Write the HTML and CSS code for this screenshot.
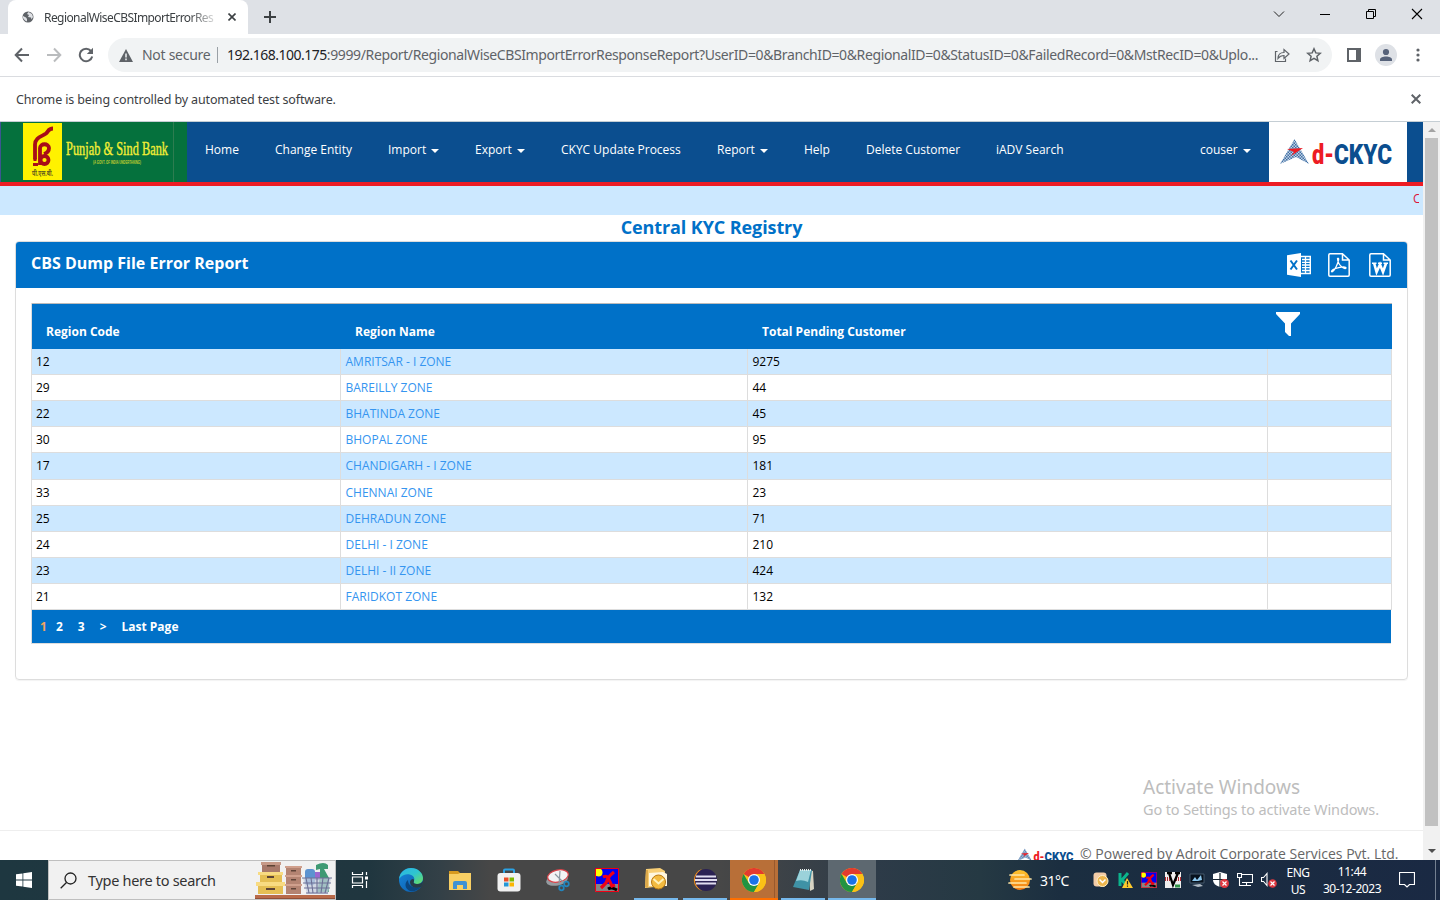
FILE: index.html
```html
<!DOCTYPE html>
<html lang="en">
<head>
<meta charset="utf-8">
<title>RegionalWiseCBSImportErrorResponseReport</title>
<link rel="stylesheet" href="styles.css">
</head>
<body>
<svg class="defs" width="0" height="0">
  <defs>
    <pattern id="mesh" width="3" height="3" patternUnits="userSpaceOnUse"><rect width="3" height="3" fill="#c3d2e4"/><path d="M0 0h1.500v1.500H0zM1.500 1.500h1.500v1.500H1.500z" fill="#3f70a6"/></pattern>
    <linearGradient id="edgeA" x1="0" y1="0" x2="1" y2="1"><stop offset="0" stop-color="#2bb4e6"/><stop offset=".5" stop-color="#2fc5cf"/><stop offset="1" stop-color="#6ee05a"/></linearGradient>
    <linearGradient id="edgeB" x1="0" y1="0" x2="1" y2="1"><stop offset="0" stop-color="#1788dc"/><stop offset="1" stop-color="#0c59a8"/></linearGradient>
    <linearGradient id="sun" x1="0" y1="0" x2="0" y2="1"><stop offset="0" stop-color="#ffc52e"/><stop offset="1" stop-color="#f07a12"/></linearGradient>
    <symbol id="chrome" viewBox="0 0 24 24">
      <circle cx="12" cy="12" r="12" fill="#fbc116"/>
      <path d="M12 12 1.6 6A12 12 0 0 1 22.4 6H12z" fill="#e33b2e"/>
      <path d="M1.6 6A12 12 0 0 0 12 24l5.2-9L12 12 6.8 15z" fill="#229342"/>
      <path d="M22.4 6H12v6l5.2 3L12 24A12 12 0 0 0 22.4 6z" fill="#fbc116"/>
      <circle cx="12" cy="12" r="6" fill="#fff"/><circle cx="12" cy="12" r="4.8" fill="#1a73e8"/>
    </symbol>
    <symbol id="xman" viewBox="0 0 24 24">
      <path fill="#0000f5" d="M0 0h24v24H0z"/><path fill="#858585" d="M0 16h24v8H0z"/><circle cx="3.5" cy="4.5" r="4" fill="#ff0"/>
      <path d="M13 21c3-2 5-1 9 1" stroke="#000" stroke-width="3" fill="none"/>
      <path d="M8 9c4-2 5 0 7 5l2 4 3-1M19 4c-4 3-7 7-8 11l-5 5" stroke="#f00014" stroke-width="3.2" fill="none"/>
      <path d="M.5.5h23v23H.5z" fill="none" stroke="#f00014"/>
    </symbol>
    <symbol id="ckyc" viewBox="0 0 114 30">
      <path d="M14.500 1 29 26 16 19 0 26z" fill="url(#mesh)"/>
      <path d="M7 11 23 10 11 18 14 14z" fill="#ed1c24"/>
      <text x="32" y="25.500" font-family="Roboto, sans-serif" font-weight="900" font-size="27" fill="#ed1c24" textLength="22" lengthAdjust="spacingAndGlyphs">d-</text>
      <text x="54" y="25.500" font-family="Roboto, sans-serif" font-weight="900" font-size="27" fill="#0b4e8f" textLength="58" lengthAdjust="spacingAndGlyphs">CKYC</text>
    </symbol>
  </defs>
</svg>

<header class="chrome">
  <div class="tabstrip">
    <div class="tab">
      <svg class="globe" width="12" height="12" viewBox="0 0 12 12"><circle cx="6" cy="6" r="5.5" fill="#5f6368"/><path d="M1 5l3 1.500 1 1.500v2.500L3 9.500 1 7zM6.500 1 5 3l2 1-1 2 3 .5L9.500 8.500 11 6 10 3z" fill="#dfe1e5"/></svg>
      <span class="tab-title">RegionalWiseCBSImportErrorRes</span>
      <svg class="tab-x" width="8" height="8" viewBox="0 0 8 8"><path d="M.5.5l7 7M7.500.5l-7 7" stroke="#3c4043" stroke-width="1.600"/></svg>
    </div>
    <svg class="newtab" width="12" height="12" viewBox="0 0 12 12"><path d="M6 0v12M0 6h12" stroke="#3c4043" stroke-width="2"/></svg>
    <div class="winctl">
      <svg width="12" height="12" viewBox="0 0 12 12"><path d="M1 3.500 6 8.500 11 3.500" fill="none" stroke="#222"/></svg>
      <svg width="12" height="12" viewBox="0 0 12 12"><path d="M1 6.500h10" stroke="#000"/></svg>
      <svg width="12" height="12" viewBox="0 0 12 12"><path d="M1.500 3.500h7v7h-7zM3.500 3V1.500h7v7H9" fill="none" stroke="#000"/></svg>
      <svg width="12" height="12" viewBox="0 0 12 12"><path d="M1 1l10 10M11 1 1 11" stroke="#000" stroke-width="1.100"/></svg>
    </div>
  </div>
  <div class="toolbar">
    <svg class="nav-ic" width="16" height="16" viewBox="0 0 16 16"><path d="M15 8H2M8 1.500 1.700 8 8 14.500" fill="none" stroke="#5f6368" stroke-width="2"/></svg>
    <svg class="nav-ic" width="16" height="16" viewBox="0 0 16 16"><path d="M1 8h13M8 1.500 14.300 8 8 14.500" fill="none" stroke="#babcbe" stroke-width="2"/></svg>
    <svg class="nav-ic" width="16" height="16" viewBox="0 0 16 16"><path d="M13 4A6.300 6.300 0 1 0 14.200 9.500" fill="none" stroke="#5f6368" stroke-width="2"/><path d="M15 .8V7H8.800z" fill="#5f6368"/></svg>
    <div class="omnibox">
      <svg width="14" height="13" viewBox="0 0 14 13"><path d="M7 0l7 13H0z" fill="#5f6368"/><path d="M7 4.500v4M7 9.500v1.700" stroke="#f1f3f4" stroke-width="1.500"/></svg>
      <span class="insecure">Not secure</span><i class="sep"></i>
      <span class="url"><b>192.168.100.175</b>:9999/Report/RegionalWiseCBSImportErrorResponseReport?UserID=0&amp;BranchID=0&amp;RegionalID=0&amp;StatusID=0&amp;FailedRecord=0&amp;MstRecID=0&amp;Uplo...</span>
      <svg class="share" width="16" height="16" viewBox="0 0 16 16"><path d="M3.500 4.500H1.500v10h10v-3" fill="none" stroke="#5f6368" stroke-width="1.200"/><path d="M4 11.500C4 8 6 5.500 10 5.500V2.500L15 7l-5 4.500V8.500C7 8.500 5.500 9.500 4 11.500z" fill="none" stroke="#5f6368" stroke-width="1.200"/></svg>
      <svg class="star" width="16" height="16" viewBox="0 0 16 16"><path d="M8 1.800l1.800 4.100 4.500.4-3.400 3 1 4.400L8 11.400l-3.900 2.300 1-4.400-3.400-3 4.500-.4z" fill="none" stroke="#5f6368" stroke-width="1.500"/></svg>
    </div>
    <svg class="side" width="14" height="14" viewBox="0 0 14 14"><path d="M0 0h14v14H0z" fill="#5f6368"/><path d="M2 2h7v10H2z" fill="#fff"/></svg>
    <svg class="avatar" width="22" height="22" viewBox="0 0 22 22"><circle cx="11" cy="11" r="11" fill="#dee1e6"/><circle cx="11" cy="8" r="3.100" fill="#56627a"/><path d="M5 17v-1.500c0-2 3-3 6-3s6 1 6 3V17z" fill="#56627a"/></svg>
    <svg class="dots" width="4" height="14" viewBox="0 0 4 14"><g fill="#5f6368"><circle cx="2" cy="2" r="1.600"/><circle cx="2" cy="7" r="1.600"/><circle cx="2" cy="12" r="1.600"/></g></svg>
  </div>
  <div class="infobar"><span>Chrome is being controlled by automated test software.</span>
    <svg width="10" height="10" viewBox="0 0 10 10"><path d="M.7.7l8.600 8.600M9.300.7.7 9.300" stroke="#5f6368" stroke-width="2"/></svg></div>
</header>

<div class="viewport">
  <main class="page">
    <nav class="navbar">
      <svg class="bank" width="187" height="60" viewBox="0 0 187 60">
        <path fill="#05713d" d="M0 0h187v60H0z"/><path d="M173.500 0v60" stroke="#2d7d50"/><path d="M.5 0v60" stroke="#3c5590"/><path fill="#fff200" d="M23 1h39v57H23z"/>
        <g fill="none" stroke="#a80d18" stroke-width="3.800"><path d="M53 6.500c-5 0-4.500 3-7 5-4 3-11 4-11 11v15"/><path d="M40 43V26c0-5 9-5 9 0 0 3-2 5-5 6"/><circle cx="44.500" cy="38" r="4"/><path d="M35 36v3M33 42.500h5" stroke-width="3"/></g>
        <text x="32" y="54" font-family="Noto Sans, sans-serif" font-size="8" font-weight="700" fill="#6b641c" textLength="21" lengthAdjust="spacingAndGlyphs">पी.एस.बी.</text>
        <text x="66" y="33" font-family="Liberation Serif, serif" font-size="19" fill="#f2ee35" stroke="#f2ee35" stroke-width=".4" textLength="102" lengthAdjust="spacingAndGlyphs">Punjab &amp; Sind Bank</text>
        <text x="93" y="42" font-family="Liberation Sans, sans-serif" font-size="4.500" font-weight="700" fill="#c5d02f" textLength="48" lengthAdjust="spacingAndGlyphs">(A GOVT. OF INDIA UNDERTAKING)</text>
      </svg>
      <ul class="menu">
        <li class="m-home">Home</li><li class="m-change">Change Entity</li><li class="m-import">Import<i class="caret"></i></li><li class="m-export">Export<i class="caret"></i></li><li class="m-update">CKYC Update Process</li><li class="m-report">Report<i class="caret"></i></li><li class="m-help">Help</li><li class="m-delete">Delete Customer</li><li>iADV Search</li>
      </ul>
      <div class="user">couser<i class="caret"></i></div>
      <div class="brand"><svg width="114" height="30"><use href="#ckyc"/></svg></div>
    </nav>
    <div class="ticker"><span>C</span></div>
    <h1>Central KYC Registry</h1>
    <section class="panel">
      <div class="panel-head"><h2>CBS Dump File Error Report</h2>
        <div class="exports">
          <svg width="24" height="24" viewBox="0 0 24 24"><path d="M0 2.200 14 0v24L0 21.800z" fill="#fff"/><path d="M3.500 7.500l6.500 9M10 7.500l-6.500 9" stroke="#0071c8" stroke-width="2"/><path d="M14 3.500h9.300v17H14" fill="none" stroke="#fff" stroke-width="1.500"/><path d="M15 6.500h8M15 9.300h8M15 12h8M15 14.700h8M15 17.500h8M18.500 4v16" stroke="#fff" stroke-width="1.300"/></svg>
          <svg width="22" height="24" viewBox="0 0 22 24"><path d="M14.500.8H2Q.8.800.8 2v20q0 1.200 1.200 1.200h18q1.200 0 1.200-1.200V7L14.500.8V7h6" fill="none" stroke="#fff" stroke-width="1.500"/><path d="M9.500 5.500C12 4 10 10 8 14s-4 5.500-4.500 4.500C3.500 16 18 12 18 15c-1 2-8-2-8.500-9.500z" fill="none" stroke="#fff" stroke-width="1.300"/></svg>
          <svg width="22" height="24" viewBox="0 0 22 24"><path d="M14.500.8H2Q.8.800.8 2v20q0 1.200 1.200 1.200h18q1.200 0 1.200-1.200V7L14.500.8V7h6" fill="none" stroke="#fff" stroke-width="1.500"/><path d="M5.200 10.500 7.600 19 11 11.500 14 19l3-8.500" fill="none" stroke="#fff" stroke-width="2.600"/><path d="M3 10.300h4.500M9 10.300h4M14.500 10.300H19" stroke="#fff" stroke-width="1.600"/></svg>
        </div>
      </div>
      <table>
        <thead><tr><th class="c1">Region Code</th><th class="c2">Region Name</th><th class="c3">Total Pending Customer</th><th class="c4"><svg width="24" height="25" viewBox="0 0 24 25"><path d="M0 0h24v2l-9 9.500V24h-2l-4-4V11.500L0 2z" fill="#fff"/></svg></th></tr></thead>
        <tbody>
          <tr><td>12</td><td>AMRITSAR - I ZONE</td><td>9275</td><td></td></tr>
          <tr><td>29</td><td>BAREILLY ZONE</td><td>44</td><td></td></tr>
          <tr><td>22</td><td>BHATINDA ZONE</td><td>45</td><td></td></tr>
          <tr><td>30</td><td>BHOPAL ZONE</td><td>95</td><td></td></tr>
          <tr class="tall"><td>17</td><td>CHANDIGARH - I ZONE</td><td>181</td><td></td></tr>
          <tr><td>33</td><td>CHENNAI ZONE</td><td>23</td><td></td></tr>
          <tr><td>25</td><td>DEHRADUN ZONE</td><td>71</td><td></td></tr>
          <tr><td>24</td><td>DELHI - I ZONE</td><td>210</td><td></td></tr>
          <tr><td>23</td><td>DELHI - II ZONE</td><td>424</td><td></td></tr>
          <tr><td>21</td><td>FARIDKOT ZONE</td><td>132</td><td></td></tr>
        </tbody>
      </table>
      <div class="pager"><span class="now">1</span><span class="p2">2</span><span>3</span><span>&gt;</span><span>Last Page</span></div>
    </section>
    <aside class="activate"><p class="a1">Activate Windows</p><p class="a2">Go to Settings to activate Windows.</p></aside>
    <footer><svg width="58" height="15"><use href="#ckyc"/></svg><span>© Powered by Adroit Corporate Services Pvt. Ltd.</span></footer>
  </main>
  <div class="scroll"><i class="up"></i><i class="thumb"></i><i class="down"></i></div>
</div>

<div class="taskbar">
  <div class="start"><svg width="16" height="16" viewBox="0 0 16 16"><path d="M0 2.300 6.500 1.400V7.500H0zM7.300 1.200 16 0v7.500H7.300zM0 8.500h6.500v6.100L0 13.700zM7.300 8.500H16V16l-8.700-1.200z" fill="#fff"/></svg></div>
  <div class="search">
    <svg width="17" height="17" viewBox="0 0 17 17"><circle cx="10.500" cy="6.500" r="5.500" fill="none" stroke="#222" stroke-width="1.300"/><path d="M6.500 10.500.7 16.300" stroke="#222" stroke-width="1.300"/></svg>
    <span>Type here to search</span>
    <svg class="boxes" width="80" height="38" viewBox="0 0 80 38">
      <path fill="#b96a49" d="M0 34h80v4H0z"/><path fill="#915038" d="M0 37h80v1H0z"/>
      <path fill="#a8796a" d="M7 1h18v10H7z"/><path fill="#c79a88" d="M6 1h20v3H6z"/><path fill="#e5bf54" d="M5 11h22v10H5zM3 22h25v11H3z"/><path fill="#f8db82" d="M3 11h25v3H3zM1 21h29v4H1z"/><path fill="#5d4435" d="M12 4h8v1.500h-8zM12 15h7v2h-7zM11 27h9v2h-9z"/>
      <path fill="#b48472" d="M31 6h15v27H31z"/><path fill="#d0a08d" d="M30 5h17v2H30zM30 14h17v2H30zM30 23h17v2H30z"/><path fill="#604438" d="M36 9h5v1.500h-5zM36 18h5v1.500h-5zM36 27h5v1.500h-5z"/>
      <rect x="50" y="8" width="10" height="16" rx="3" fill="#5c93d0"/><path fill="#9c68cf" d="M60 11h5v8h-5z"/><path fill="#3e9a73" d="M61 4q8-4 12 0v4h-4l5 9v14H62l3-15V8l-4 1z"/><path fill="#c4cede" fill-opacity=".75" d="M48 17h28l-3 16H52z"/>
      <path d="M47 17h30M48 22h28M49 27h26M51 32h22M51 17l3 15M56 17l2 15M62 17v15M68 17l-2 15M74 17l-4 15" stroke="#6c7096" stroke-width="1.100"/>
    </svg>
  </div>
  <div class="apps">
    <div class="app first"><svg width="18" height="16" viewBox="0 0 18 16"><path d="M1.500 0v2.500h10V0M1.500 16v-2.500h10V16M1.500 5h10v6h-10zM15.500 0v3M15.500 9v7" fill="none" stroke="#fff" stroke-width="1.200"/><path d="M14 4.500h3v3h-3z" fill="#fff"/></svg></div>
    <div class="app"><svg width="24" height="24" viewBox="0 0 24 24"><circle cx="12" cy="12" r="12" fill="url(#edgeB)"/><path d="M0 11C1 4 6 0 12 0c7 0 12 5 12 10 0 4-3 6-6 6-3 0-4-1-3-3C17 8 10 5 5 7 2 8 0 11 0 11z" fill="url(#edgeA)"/><path d="M9 12c0 6 6 9 13 7-3 3-7 5-11 4-5-2-6-8-2-11z" fill="#0b467f"/><path d="M15 13c-1 2 0 3 3 3 3 0 5-1 6-3 0 3-1 5-2 6-5 2-11 0-11-5 0-2 2-3 3-3 1 0 1 1 1 2z" fill="#263b48"/></svg></div>
    <div class="app"><svg width="22" height="19" viewBox="0 0 22 19"><path fill="#d79a1f" d="M0 0h9l2 2v5H0z"/><path fill="#f8cf64" d="M0 3h9l2-1h11v17H0z"/><path fill="#3f91d3" d="M4 18v-6q0-2 2-2h10q2 0 2 2v6h-4v-4H8v4z"/></svg></div>
    <div class="app"><svg width="24" height="24" viewBox="0 0 24 24"><path d="M7 6V2.500Q7 1.500 8 1.500h8q1 0 1 1V6" fill="none" stroke="#2ba3e5" stroke-width="2"/><rect x=".5" y="5" width="23" height="18.500" rx="3" fill="#f1f1f1"/><path fill="#e94f28" d="M7 9.500h4.500v4H7z"/><path fill="#7eb900" d="M12.500 9.500H17v4h-4.500z"/><path fill="#2497d6" d="M7 14.500h4.500v4H7z"/><path fill="#fbb600" d="M12.500 14.500H17v4h-4.500z"/></svg></div>
    <div class="app"><svg width="24" height="24" viewBox="0 0 24 24"><ellipse cx="11" cy="12" rx="11" ry="5.500" fill="#949ba0" transform="rotate(-12 11 12)"/><ellipse cx="12" cy="8" rx="10.500" ry="6" fill="#f2f3f4" stroke="#d94349" stroke-width="1.200" transform="rotate(-12 12 8)"/><path d="M9 6l9 9M14 3l-1 14" stroke="#8c98a1" stroke-width="1.200"/><g fill="none" stroke="#2385bd" stroke-width="1.700"><circle cx="15.500" cy="20" r="2.300"/><circle cx="20.500" cy="16" r="2.300"/></g></svg></div>
    <div class="app"><svg width="24" height="24"><use href="#xman"/></svg></div>
    <div class="app run"><svg width="24" height="24" viewBox="0 0 24 24"><path fill="#f8cf76" d="M2 1l14-1 5 3v15L1 20z"/><path fill="#fff7df" d="M5 5l14-1 4 2v12H5z"/><path fill="#dca94b" d="M2 2h2v18L1 19z"/><circle cx="14.500" cy="14" r="7" fill="#f3bb40" stroke="#b97a14"/><path d="M9.500 11l5 4.500 5-4.500" stroke="#fff1b8" stroke-width="2" fill="none"/></svg></div>
    <div class="app run"><svg width="24" height="24" viewBox="0 0 24 24"><path d="M9 1a11.500 11.500 0 0 0 0 22C2 18 2 6 9 1z" fill="#f7941e"/><circle cx="13" cy="12" r="11" fill="#2b2253"/><path d="M3 8.500h20M2 12h22M3 15.500h20" stroke="#e1def0" stroke-width="1.800"/></svg></div>
    <div class="app orange"><svg width="24" height="24"><use href="#chrome"/></svg></div>
    <div class="app run"><svg width="24" height="24" viewBox="0 0 24 24"><path fill="#d7d4c3" d="M18 2l4 1 1 18-4 2z"/><path fill="#3f92a6" d="M9 2h12l-3 20-16-3z"/><path fill="#9bd2da" d="M9 2h11l-3 12Q11 11 5 13z"/><path d="M9 2h12" stroke="#e5eeee" stroke-width="2" stroke-dasharray="1 1"/></svg></div>
    <div class="app active"><svg width="24" height="24"><use href="#chrome"/></svg></div>
  </div>
  <div class="weather"><svg width="24" height="20" viewBox="0 0 24 20"><circle cx="12" cy="10" r="10" fill="url(#sun)"/><path d="M2 5h14M7 9h16M1 13h17M6 17h15" stroke="#ffe6a4" stroke-width="1.700" stroke-linecap="round"/></svg><span>31°C</span></div>
  <div class="tray">
    <svg width="16" height="16" viewBox="0 0 16 16"><rect x=".5" y=".5" width="13" height="14" rx="3" fill="#f3cca7"/><circle cx="9.500" cy="9" r="5.500" fill="#edb64d" stroke="#fff0c5"/><path d="M6.500 7.500l3 3 3-3" stroke="#fff" stroke-width="1.500" fill="none"/></svg>
    <svg width="16" height="16" viewBox="0 0 16 16"><path d="M3 1v13M11 1 5 8l5 6" stroke="#0bb48c" stroke-width="3" fill="none"/><path d="M10 6l6 10H5z" fill="#ffca2d"/><path d="M10.500 9v3.500M10.500 13.500v1.200" stroke="#222" stroke-width="1.200"/></svg>
    <svg width="16" height="16"><use href="#xman"/></svg>
    <svg width="16" height="16" viewBox="0 0 16 16"><path fill="#eee" d="M0 0h16v16H0z"/><path d="M0 7h5M11 7h5" stroke="#b02a31" stroke-width="4" stroke-dasharray="1 1"/><path d="M2 1h5M10 1h5M4 1l4 12 5-12" stroke="#000" stroke-width="2.300" fill="none"/><path d="M10 14h5" stroke="#309548" stroke-width="3"/></svg>
    <svg width="16" height="16" viewBox="0 0 16 16"><path d="M1 2h14v9H1z" fill="#06111d" stroke="#45586c"/><path d="M3 9l3-4 2 3 4-5 1 5-4 1z" fill="#8dc9f0"/><path d="M3 13l8-1 3 2-5 1z" fill="#b1bbc5"/></svg>
    <svg width="16" height="16" viewBox="0 0 16 16"><path d="M7 0l7 2v6q0 5-7 7-7-2-7-7V2z" fill="#fff"/><path d="M7 1v14M0 7.500h14" stroke="#17232f" stroke-width="1.200"/><circle cx="11.500" cy="11.500" r="4.500" fill="#de3941"/><path d="M9.500 9.500l4 4m0-4-4 4" stroke="#fff" stroke-width="1.200"/></svg>
    <svg width="16" height="16" viewBox="0 0 16 16"><path d="M4.500 2.500h11v8H5M9.500 10.500v3M6 13.500h8M.5 1.500h4v4h-4zM2.500 5.500v8H6" fill="none" stroke="#fff" stroke-width="1.100"/></svg>
    <svg width="16" height="16" viewBox="0 0 16 16"><path d="M.5 5.500h2l3.500-4v12l-3.500-4h-2z" fill="none" stroke="#fff" stroke-width="1.100"/><circle cx="11.500" cy="11.500" r="4.300" fill="#de3941"/><path d="M9.500 9.500l4 4m0-4-4 4" stroke="#fff" stroke-width="1.200"/></svg>
  </div>
  <div class="lang"><span>ENG</span><span>US</span></div>
  <div class="clock"><span>11:44</span><span>30-12-2023</span></div>
  <svg class="note" width="16" height="16" viewBox="0 0 16 16"><path d="M.5.5h15v12h-5L8 15l-2.500-2.500h-5z" fill="none" stroke="#fff" stroke-width="1.200"/></svg>
  <i class="desk"></i>
</div>
</body>
</html>
```
FILE: styles.css
```css
* { box-sizing: border-box; }
body { margin: 0; width: 1440px; height: 900px; overflow: hidden; display: flex; flex-direction: column; background: #fff; font-family: "Open Sans", "Noto Sans", sans-serif; }
svg { flex: none; display: block; }
.defs { position: absolute; }
h1, h2, p, ul { margin: 0; padding: 0; }
span { white-space: nowrap; }

.chrome { height: 122px; flex: none; color: #3c4043; font-family: "Noto Sans", sans-serif; }
.tabstrip { height: 34px; background: #dee1e6; display: flex; align-items: flex-start; padding-left: 8px; }
.tab { width: 240px; height: 34px; background: #fff; border-radius: 8px 8px 0 0; display: flex; align-items: center; padding-left: 14px; }
.tab-title { width: 174px; margin-left: 10px; overflow: hidden; font-size: 12px; letter-spacing: -.57px; mask-image: linear-gradient(90deg, #000 145px, transparent 176px); }
.tab-x { margin-left: 10px; }
.newtab { margin: 11px 0 0 16px; }
.winctl { display: flex; gap: 34px; margin: 8px 17px 0 auto; }
.toolbar { height: 43px; display: flex; align-items: center; padding: 0 20px 0 14px; border-bottom: 1px solid #dadce0; }
.nav-ic { margin-right: 16px; }
.omnibox { width: 1224px; height: 34px; margin-left: -2px; border-radius: 17px; background: #f1f3f4; display: flex; align-items: center; padding-left: 11px; margin-right: 15px; color: #5f6368; font-size: 14px; }
.omnibox span { position: relative; top: -1px; }
.insecure { margin-left: 9px; width: 67px; letter-spacing: -.28px; }
.sep { width: 1px; height: 16px; background: #9aa0a6; margin: 0 9px 0 8px; }
.url { width: 1033px; letter-spacing: -.38px; }
.url b { font-weight: 400; color: #202124; letter-spacing: -.5px; }
.share { margin-left: 14px; }
.star { margin-left: 16px; }
.avatar { margin-left: 14px; }
.dots { margin-left: 19px; }
.infobar { height: 45px; display: flex; align-items: center; justify-content: space-between; padding: 0 19px 0 16px; font-size: 12.5px; letter-spacing: -.13px; border-bottom: 1px solid #c5ced4; }

.viewport { height: 738px; flex: none; display: flex; overflow: hidden; }
.page { width: 1423px; height: 738px; display: flex; flex-direction: column; overflow: hidden; }
.navbar { height: 64px; flex: none; background: #0b4e8f; border-bottom: 4px solid #ed1c24; display: flex; color: #fff; font-size: 12px; padding-right: 16px; }
.menu { list-style: none; display: flex; padding-left: 18px; line-height: 55px; white-space: nowrap; }
.m-home { width: 70px; } .m-change { width: 113px; } .m-import { width: 87px; } .m-export { width: 86px; } .m-update { width: 156px; } .m-report { width: 87px; } .m-help { width: 62px; } .m-delete { width: 130px; }
.caret { display: inline-block; margin-left: 5px; vertical-align: 1px; border: 4px solid transparent; border-top-color: #fff; border-bottom: 0; }
.user { margin-left: auto; width: 69px; line-height: 55px; }
.brand { width: 138px; height: 60px; background: #fff; padding: 16px 0 0 11px; }
.ticker { height: 29px; flex: none; background: #cce8ff; display: flex; justify-content: flex-end; padding: 4px 4px 0 0; color: #dc143c; font-size: 12px; }
.ticker span { width: 6px; overflow: hidden; line-height: 18px; }
h1 { height: 26px; flex: none; text-align: center; font-size: 18px; line-height: 25px; font-weight: 700; letter-spacing: -.1px; color: #0071c8; }
.panel { width: 1393px; height: 439px; flex: none; margin-left: 15px; border: 1px solid #ddd; border-radius: 4px; box-shadow: 0 1px 1px rgba(0,0,0,.05); }
.panel-head { height: 46px; background: #0071c8; border-radius: 3px 3px 0 0; padding: 0 16px 0 15px; display: flex; justify-content: space-between; color: #fff; }
h2 { font-size: 16px; line-height: 42px; font-weight: 700; }
.exports { display: flex; gap: 18px; padding-top: 11px; }
.exports svg:nth-child(2) { margin: 0 1px 0 -1px; }
table { width: 1361px; margin: 15px 0 0 15px; table-layout: fixed; border-spacing: 0; border-left: 1px solid #ddd; font-size: 12px; }
th { height: 46px; background: #0071c8; border-top: 1px solid #bbb; color: #fff; text-align: left; vertical-align: top; padding: 19px 0 0 14px; line-height: 17px; font-weight: 700; }
.c1 { width: 309px; } .c2 { width: 407px; } .c3 { width: 520px; } .c4 { padding: 8px 0 0 8px; }
td { height: 26px; padding: 0 4.5px; line-height: 17px; border-right: 1px solid #ddd; border-bottom: 1px solid #ddd; color: #000; }
td:first-child { padding-left: 4px; }
.tall td { height: 27px; padding-bottom: 1px; }
td:nth-child(2) { color: #3595f0; }
tbody tr:nth-child(odd) { background: #cce8ff; }
.pager { width: 1360px; height: 34px; margin-left: 15px; background: #0071c8; border-left: 1px solid #ddd; border-bottom: 1px solid #ddd; display: flex; padding-left: 8px; line-height: 33px; color: #fff; font-weight: 700; font-size: 12px; gap: 15px; }
.now { color: #f4a460; }
.p2 { margin-left: -6px; }
.activate { margin: 95px 0 0 1143px; height: 55px; flex: none; color: #bdbdbd; font-family: "Noto Sans", sans-serif; white-space: nowrap; }
.a1 { font-size: 19px; line-height: 25px; }
.a2 { font-size: 14.5px; line-height: 18px; letter-spacing: -.12px; }
footer { height: 60px; flex: none; border-top: 1px solid #eee; display: flex; padding: 16px 0 0 1017px; color: #666; font-size: 14px; line-height: 14px; }
footer svg { margin-top: 1px; }
footer span { margin-left: 5px; }
.scroll { width: 17px; background: #f1f1f1; display: flex; flex-direction: column; align-items: center; }
.up { margin-top: 6px; border: 4px solid transparent; border-bottom: 4px solid #a3a3a3; border-top: 0; }
.thumb { width: 13px; height: 688px; background: #c1c1c1; margin-top: 6px; }
.down { margin-top: 23px; border: 4px solid transparent; border-top: 4px solid #505050; border-bottom: 0; }

.taskbar { height: 40px; flex: none; display: flex; color: #fff; font-family: "Noto Sans", sans-serif; background: linear-gradient(90deg, #1e3740 0, #20363f 370px, #334047 440px, #474747 490px, #474747 720px, #2d3b48 876px, #253943 980px, #1b2e40 1060px, #1a2943 1440px); }
.start { width: 48px; padding: 12px 0 0 16px; }
.search { width: 288px; height: 40px; background: #f1f1f1; border: 1px solid #bfbfbf; display: flex; align-items: center; padding-left: 11px; color: #333; font-size: 14.5px; letter-spacing: -.3px; }
.search span { width: 156px; margin-left: 11px; }
.boxes { margin-left: 12px; }
.apps { display: flex; gap: 1px; }
.app { width: 48px; height: 40px; display: flex; align-items: center; justify-content: center; border-bottom: 2px solid transparent; padding-top: 2px; }
.first { margin-right: 2px; }
.run { border-image: linear-gradient(90deg, transparent 4px, #76b9ed 4px, #76b9ed 44px, transparent 44px) 2; border-width: 0 0 2px; border-style: solid; }
.orange { background: linear-gradient(90deg, #b86f38 44px, #98592d 44px, #98592d 45px, #b86f38 45px); border-color: #ff6f00; }
.active { background: #5d6870; border-color: #76b9ed; }
.weather { margin-left: 132px; display: flex; align-items: center; width: 84px; font-size: 14px; letter-spacing: -.5px; }
.weather span { margin-left: 8px; }
.tray { display: flex; gap: 8px; align-items: center; margin-left: 1px; }
.lang, .clock { display: flex; flex-direction: column; align-items: center; font-size: 12px; line-height: 17px; padding-top: 3px; letter-spacing: -.45px; }
.lang { width: 30px; margin-left: 6px; padding-top: 4px; }
.clock { width: 62px; margin-left: 8px; }
.note { margin: 12px 0 0 16px; }
.desk { width: 1px; background: #748091; margin-left: 20px; }
```
